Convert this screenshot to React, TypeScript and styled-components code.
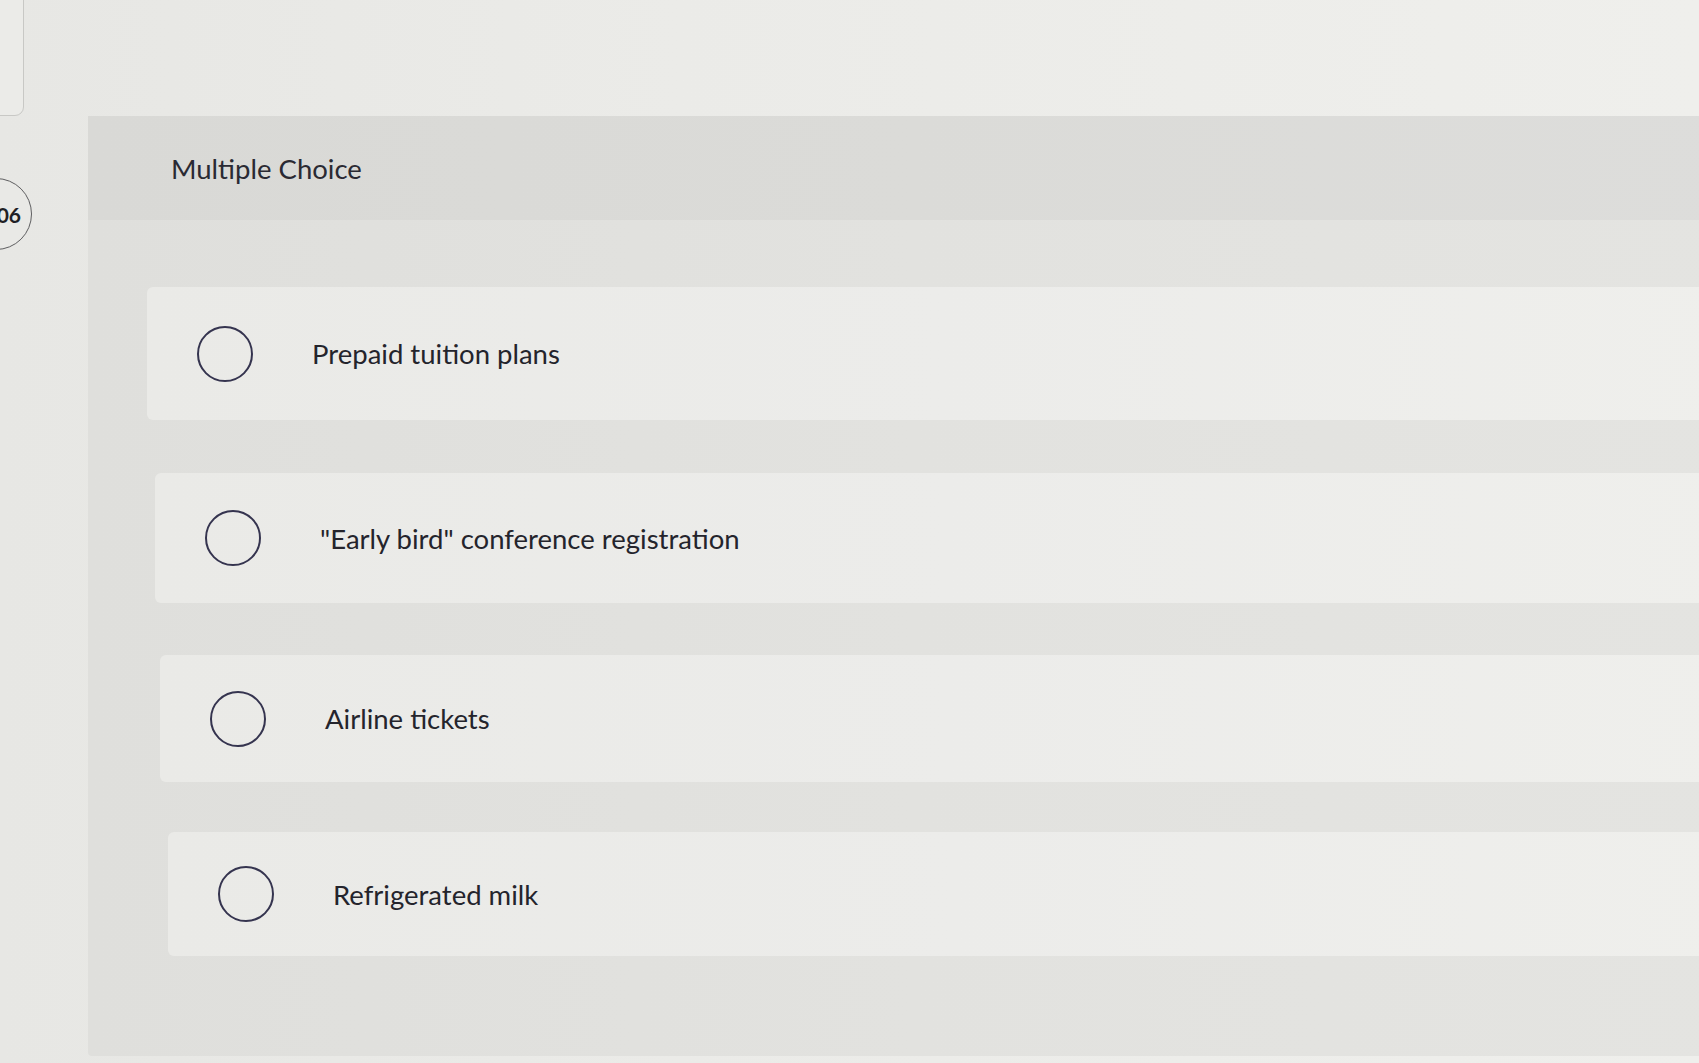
import React from 'react';
import styled, { createGlobalStyle } from 'styled-components';

const GlobalStyle = createGlobalStyle`
  html, body {
    margin: 0;
    padding: 0;
    height: 100%;
    overflow: hidden;
    background: #e9e9e6;
  }
  body {
    font-family: Lato, "Open Sans", "Liberation Sans", sans-serif;
    color: #26262e;
  }
`;

const Page = styled.div`
  display: grid;
  grid-template-columns: 88px 1fr;
  height: 1063px;
  background: linear-gradient(90deg, #e7e7e4 0%, #ebebe8 40%, #efefec 100%);
`;

const Gutter = styled.div`
  display: flex;
  flex-direction: column;
  align-items: flex-start;
`;

const StubCard = styled.div`
  width: 60px;
  height: 126px;
  margin: -10px 0 0 -36px;
  box-sizing: border-box;
  border: 1.5px solid #c8c8c5;
  border-radius: 0 0 9px 0;
  background: #ebebe8;
`;

const NumberBadge = styled.div`
  width: 72px;
  height: 72px;
  margin: 62px 0 0 -40px;
  box-sizing: border-box;
  border: 1.5px solid #5e5e60;
  border-radius: 36px;
  display: flex;
  align-items: center;
  justify-content: flex-end;
  padding-right: 10px;
  font-size: 21px;
  font-weight: 700;
  color: #1f1f25;
  background: #e9e9e6;
`;

const Main = styled.div`
  padding-top: 116px;
`;

const Panel = styled.section`
  width: calc(100% + 40px);
  height: 940px;
  background: linear-gradient(90deg, #dfdfdc 0%, #e2e2df 50%, #e4e4e1 100%);
  border-radius: 4px 0 0 4px;
`;

const PanelHeader = styled.header`
  height: 104px;
  display: flex;
  align-items: center;
  padding-left: 83px;
  background: linear-gradient(90deg, #d9d9d6 0%, #dbdbd8 50%, #dddddb 100%);
  font-size: 27.5px;
  color: #2a2a33;
`;

const OptionList = styled.div`
  display: flex;
  flex-direction: column;
  padding-top: 67px;
`;

const OptionCard = styled.label<{ indent: number; tall: number; gap: number }>`
  height: ${(p) => p.tall}px;
  margin: 0 0 ${(p) => p.gap}px ${(p) => p.indent}px;
  display: flex;
  align-items: center;
  padding-left: 50px;
  border-radius: 6px 0 0 6px;
  background: linear-gradient(90deg, #eaeae7 0%, #ececea 50%, #efefec 100%);
  cursor: pointer;
`;

const Radio = styled.span`
  width: 56px;
  height: 56px;
  flex: none;
  box-sizing: border-box;
  border: 2.5px solid #35344f;
  border-radius: 50%;
`;

const OptionText = styled.span`
  margin-left: 59px;
  font-size: 27.5px;
  color: #24242c;
`;

const options = [
  { text: 'Prepaid tuition plans', indent: 59, tall: 133, gap: 53 },
  { text: '"Early bird" conference registration', indent: 67, tall: 130, gap: 52 },
  { text: 'Airline tickets', indent: 72, tall: 127, gap: 50 },
  { text: 'Refrigerated milk', indent: 80, tall: 124, gap: 0 },
];

export default function App() {
  return (
    <>
      <GlobalStyle />
      <Page>
        <Gutter>
          <StubCard />
          <NumberBadge>06</NumberBadge>
        </Gutter>
        <Main>
          <Panel>
            <PanelHeader>Multiple Choice</PanelHeader>
            <OptionList>
              {options.map((o, i) => (
                <OptionCard key={i} indent={o.indent} tall={o.tall} gap={o.gap}>
                  <Radio />
                  <OptionText>{o.text}</OptionText>
                </OptionCard>
              ))}
            </OptionList>
          </Panel>
        </Main>
      </Page>
    </>
  );
}
